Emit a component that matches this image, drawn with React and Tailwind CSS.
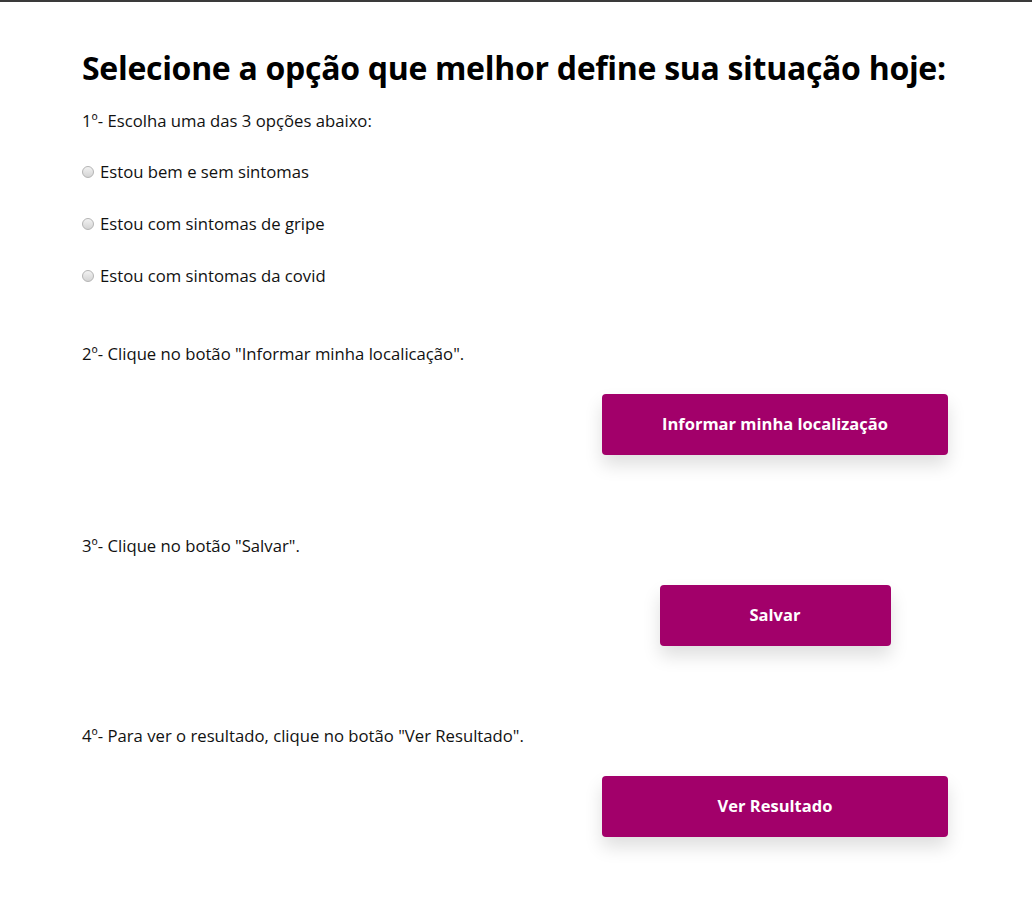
const OPTIONS = [
  "Estou bem e sem sintomas",
  "Estou com sintomas de gripe",
  "Estou com sintomas da covid",
];

function Radio() {
  return (
    <span className="inline-block h-[12px] w-[12px] shrink-0 rounded-full border border-[#b4b4b4] bg-gradient-to-b from-[#f2f2f2] to-[#d4d4d4]" />
  );
}

function ActionButton({ children, w = "w-[346px]" }) {
  return (
    <div className="flex justify-end">
      <div className="flex w-[346px] justify-center">
        <button
          type="button"
          className={`${w} h-[61px] rounded-[4px] bg-[#a2006a] text-[16.5px] font-bold text-white shadow-[0_10px_18px_rgba(0,0,0,0.13)]`}
        >
          {children}
        </button>
      </div>
    </div>
  );
}

export default function App() {
  return (
    <div
      className="min-h-screen border-t-2 border-[#3a3a3a] bg-white text-[#111]"
      style={{ fontFamily: '"Open Sans", "Noto Sans", sans-serif' }}
    >
      <div className="ml-[82px] w-[866px] pt-[42px]">
        <h1 className="text-[32px] font-bold leading-[48px] tracking-[-0.3px] text-black">
          Selecione a opção que melhor define sua situação hoje:
        </h1>
        <p className="mt-[17px] text-[16.7px] leading-6">1º- Escolha uma das 3 opções abaixo:</p>
        <div className="mt-[27px] flex flex-col gap-[28px]">
          {OPTIONS.map((label) => (
            <label key={label} className="flex items-center gap-[6px] text-[16.7px] leading-6">
              <Radio />
              <span>{label}</span>
            </label>
          ))}
        </div>
        <p className="mt-[54px] text-[16.7px] leading-6">
          2º- Clique no botão "Informar minha localicação".
        </p>
        <div className="mt-[28px]">
          <ActionButton>Informar minha localização</ActionButton>
        </div>
        <p className="mt-[79px] text-[16.7px] leading-6">3º- Clique no botão "Salvar".</p>
        <div className="mt-[27px]">
          <ActionButton w="w-[231px]">Salvar</ActionButton>
        </div>
        <p className="mt-[78px] text-[16.7px] leading-6">
          4º- Para ver o resultado, clique no botão "Ver Resultado".
        </p>
        <div className="mt-[28px]">
          <ActionButton>Ver Resultado</ActionButton>
        </div>
      </div>
    </div>
  );
}
